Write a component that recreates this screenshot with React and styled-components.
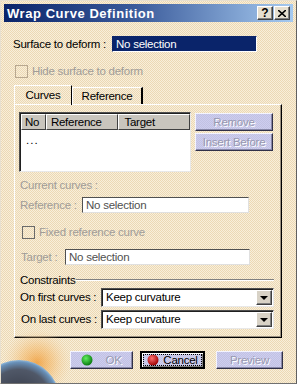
import React from "react";
import styled, { createGlobalStyle } from "styled-components";

const Global = createGlobalStyle`
  html, body { margin: 0; padding: 0; background: #f2e3c6; }
  * { box-sizing: border-box; }
`;

const Window = styled.div`
  position: relative;
  width: 297px;
  height: 384px;
  overflow: hidden;
  display: flex;
  flex-direction: column;
  padding: 3px;
  background-color: #f2e3c6;
  background-image: repeating-conic-gradient(#f8efda 0 25%, #ecd8b4 0 50%);
  background-size: 2px 2px;
  border: 1px solid #e8e0d0;
  border-right-color: #606060;
  border-bottom-color: #707070;
  font-family: "Liberation Sans", Arial, sans-serif;
  font-size: 11.5px;
  letter-spacing: -0.25px;
  line-height: 13px;
  color: #000;
`;

const TitleBar = styled.div`
  height: 18px;
  flex-shrink: 0;
  display: flex;
  align-items: center;
  padding: 0 3px 0 3px;
  background: linear-gradient(90deg, #0a246a 0%, #3a5a9a 45%, #a6caf0 100%);
`;

const Title = styled.div`
  flex: 1;
  color: #fff;
  font-weight: bold;
  font-size: 13px;
  letter-spacing: 0.55px;
`;

const CaptionButton = styled.div`
  width: 16px;
  height: 14px;
  margin-left: ${(p) => p.$ml || 0}px;
  display: flex;
  align-items: center;
  justify-content: center;
  background: #e6dfcf;
  border: 1px solid;
  border-color: #fff #404040 #404040 #fff;
  box-shadow: inset -1px -1px #808080;
  font-weight: bold;
  font-size: 12px;
  letter-spacing: 0;
  line-height: 1;
`;

const Row = styled.div`
  display: flex;
  align-items: center;
  flex-shrink: 0;
  margin-top: ${(p) => p.$mt || 0}px;
  padding-left: ${(p) => p.$pl || 0}px;
`;

const Label = styled.div`
  width: ${(p) => (p.$w ? `${p.$w}px` : "auto")};
  padding-left: ${(p) => p.$pl || 0}px;
  color: ${(p) => (p.$disabled ? "#a09c98" : "#000")};
  white-space: nowrap;
  flex-shrink: 0;
`;

const Field = styled.div`
  width: ${(p) => p.$w}px;
  height: 16px;
  display: flex;
  align-items: center;
  padding-left: 3px;
  background: ${(p) => (p.$selected ? "#0a246a" : "#fff")};
  color: ${(p) => (p.$selected ? "#fff" : "#505050")};
  border: 1px solid;
  border-color: ${(p) =>
    p.$selected ? "#0a246a #fff #fff #0a246a" : "#505050 #e0e0e0 #e0e0e0 #505050"};
`;

const Check = styled.div`
  width: 13px;
  height: 13px;
  border: 1px solid ${(p) => p.$c || "#8a8a8a"};
  margin-right: 4px;
  flex-shrink: 0;
`;

const Tabs = styled.div`
  display: flex;
  align-items: flex-end;
  flex-shrink: 0;
  margin-top: 7px;
  padding-left: 10px;
  height: 19px;
`;

const Tab = styled.div`
  width: ${(p) => p.$w}px;
  height: ${(p) => (p.$active ? 20 : 17)}px;
  display: flex;
  align-items: center;
  justify-content: center;
  padding-bottom: ${(p) => (p.$active ? 1 : 0)}px;
  border-top: 1px solid #fff;
  border-left: 1px solid #fff;
  border-right: ${(p) => (p.$active ? "1px solid #000" : "2px solid #000")};
  position: relative;
  z-index: ${(p) => (p.$active ? 2 : 1)};
  margin-bottom: ${(p) => (p.$active ? -1 : 0)}px;
`;

const Panel = styled.div`
  margin-left: 10px;
  width: 268px;
  height: 234px;
  flex-shrink: 0;
  border-top: 1px solid #fff;
  border-left: 1px solid #fff;
  border-right: 1px solid #000;
  border-bottom: 1px solid #000;
  box-shadow: inset -1px -1px #9a9080;
  display: flex;
  flex-direction: column;
  padding-left: 5px;
`;

const ListArea = styled.div`
  display: flex;
  gap: 4px;
  margin-top: 7px;
  margin-left: -1px;
`;

const Table = styled.div`
  width: 172px;
  height: 60px;
  background: #fff;
  border: 1px solid;
  border-color: #505050 #e8e8e8 #e8e8e8 #505050;
  box-shadow: inset 1px 1px #202020;
  display: flex;
  flex-direction: column;
  padding: 1px 0 0 1px;
`;

const HeaderRow = styled.div`
  display: flex;
  height: 16px;
`;

const HeaderCell = styled.div`
  width: ${(p) => p.$w}px;
  height: 16px;
  display: flex;
  align-items: center;
  padding-left: ${(p) => p.$pl || 4}px;
  background: #c9c5bd;
  border: 1px solid;
  border-color: #fff #404040 #404040 #fff;
`;

const TableBody = styled.div`
  padding: 4px 0 0 5px;
  letter-spacing: 1px;
`;

const SideButtons = styled.div`
  display: flex;
  flex-direction: column;
  gap: 2px;
  margin-top: 1px;
`;

const Btn = styled.div`
  width: ${(p) => p.$w}px;
  height: ${(p) => p.$h || 18}px;
  margin-left: ${(p) => p.$ml || 0}px;
  display: flex;
  align-items: center;
  justify-content: center;
  gap: ${(p) => p.$gap || 0}px;
  background-color: #c8c8ea;
  background-image: repeating-conic-gradient(#cdcdf0 0 25%, #c2c2e2 0 50%);
  background-size: 2px 2px;
  border: 1px solid;
  border-color: #f4f4ff #303048 #303048 #f4f4ff;
  box-shadow: inset -1px -1px #8888a8;
  color: ${(p) => (p.$disabled ? "#9898b0" : "#000")};
  text-shadow: ${(p) => (p.$disabled ? "1px 1px #fff" : "none")};
  position: relative;
  z-index: 1;
  ${(p) =>
    p.$default &&
    `
    border: 2px solid #000;
    box-shadow: inset 1px 1px #fff, inset -1px -1px #808080;
    outline: 1px dotted #000;
    outline-offset: -4px;
  `}
`;

const GroupHeader = styled.div`
  display: flex;
  align-items: center;
  margin-top: 9px;
  height: 13px;
  padding-right: 7px;
`;

const GroupLine = styled.div`
  flex: 1;
  height: 2px;
  margin-left: 1px;
  margin-top: -1px;
  border-top: 1px solid #808080;
  border-bottom: 1px solid #fff;
`;

const Combo = styled.div`
  width: 173px;
  height: 19px;
  display: flex;
  align-items: center;
  background: #fff;
  border: 1px solid;
  border-color: #505050 #e8e8e8 #e8e8e8 #505050;
  box-shadow: inset 1px 1px #202020;
  padding: 1px 1px 1px 4px;
`;

const ComboText = styled.div`
  flex: 1;
`;

const ArrowBtn = styled.div`
  width: 16px;
  height: 15px;
  display: flex;
  align-items: center;
  justify-content: center;
  background: #d8d2c6;
  border: 1px solid;
  border-color: #fff #404040 #404040 #fff;
  box-shadow: inset -1px -1px #808080;
`;

const Arrow = styled.div`
  width: 0;
  height: 0;
  border-left: 4px solid transparent;
  border-right: 4px solid transparent;
  border-top: 4px solid #000;
`;

const Footer = styled.div`
  display: flex;
  flex-shrink: 0;
  margin-top: 13px;
  padding-left: 66px;
`;

const Decoration = styled.svg`
  position: absolute;
  left: 0;
  bottom: 0;
  z-index: 0;
`;

const Sphere = ({ id, color, hi }) => (
  <svg width="12" height="12" viewBox="0 0 12 12">
    <defs>
      <radialGradient id={id} cx="0.4" cy="0.35" r="0.65">
        <stop offset="0" stopColor={hi} />
        <stop offset="1" stopColor={color} />
      </radialGradient>
    </defs>
    <circle cx="6" cy="6" r="5.5" fill={`url(#${id})`} />
  </svg>
);

export default function App() {
  return (
    <>
      <Global />
      <Window>
        <Decoration width="80" height="54" viewBox="0 0 80 54">
          <defs>
            <radialGradient id="glow" cx="36" cy="34" r="34" gradientUnits="userSpaceOnUse">
              <stop offset="0" stopColor="#f0a040" stopOpacity="0.9" />
              <stop offset="0.5" stopColor="#f4b868" stopOpacity="0.5" />
              <stop offset="1" stopColor="#f4d0a0" stopOpacity="0" />
            </radialGradient>
            <radialGradient id="globe" cx="18" cy="72" r="42" gradientUnits="userSpaceOnUse">
              <stop offset="0" stopColor="#303440" />
              <stop offset="0.75" stopColor="#505868" />
              <stop offset="0.92" stopColor="#6890b8" />
              <stop offset="1" stopColor="#a0c8e8" />
            </radialGradient>
          </defs>
          <rect x="0" y="0" width="80" height="54" fill="url(#glow)" />
          <circle cx="18" cy="72" r="41" fill="url(#globe)" />
        </Decoration>
        <TitleBar>
          <Title>Wrap Curve Definition</Title>
          <CaptionButton>?</CaptionButton>
          <CaptionButton $ml={1}>
            <svg width="8" height="7" viewBox="0 0 8 7">
              <path d="M0 0L8 7M8 0L0 7" stroke="#000" strokeWidth="1.6" />
            </svg>
          </CaptionButton>
        </TitleBar>

        <Row $mt={14} $pl={9}>
          <Label $w={99}>Surface to deform :</Label>
          <Field $selected $w={145}>No selection</Field>
        </Row>

        <Row $mt={13} $pl={11}>
          <Check $c="#b8a890" />
          <Label $disabled>Hide surface to deform</Label>
        </Row>

        <Tabs>
          <Tab $active $w={58}>Curves</Tab>
          <Tab $w={71}>Reference</Tab>
        </Tabs>

        <Panel>
          <ListArea>
            <Table>
              <HeaderRow>
                <HeaderCell $w={25} $pl={3}>No</HeaderCell>
                <HeaderCell $w={73}>Reference</HeaderCell>
                <HeaderCell $w={72} $pl={5}>Target</HeaderCell>
              </HeaderRow>
              <TableBody>...</TableBody>
            </Table>
            <SideButtons>
              <Btn $w={78} $h={18} $disabled>Remove</Btn>
              <Btn $w={78} $h={18} $disabled>Insert Before</Btn>
            </SideButtons>
          </ListArea>

          <Row $mt={7}>
            <Label $disabled>Current curves :</Label>
          </Row>

          <Row $mt={5}>
            <Label $disabled $w={62}>Reference :</Label>
            <Field $w={167}>No selection</Field>
          </Row>

          <Row $mt={13} $pl={2}>
            <Check $c="#6a6a6a" />
            <Label $disabled>Fixed reference curve</Label>
          </Row>

          <Row $mt={10}>
            <Label $disabled $w={45} $pl={1}>Target :</Label>
            <Field $w={185}>No selection</Field>
          </Row>

          <GroupHeader>
            <Label>Constraints</Label>
            <GroupLine />
          </GroupHeader>

          <Row $mt={1}>
            <Label $w={81}>On first curves :</Label>
            <Combo>
              <ComboText>Keep curvature</ComboText>
              <ArrowBtn><Arrow /></ArrowBtn>
            </Combo>
          </Row>

          <Row $mt={3}>
            <Label $w={81} $pl={1}>On last curves :</Label>
            <Combo>
              <ComboText>Keep curvature</ComboText>
              <ArrowBtn><Arrow /></ArrowBtn>
            </Combo>
          </Row>
        </Panel>

        <Footer>
          <Btn $w={63} $gap={12} $disabled>
            <Sphere id="okg" color="#0a7a10" hi="#60f060" />
            <span>OK</span>
          </Btn>
          <Btn $w={65} $ml={7} $gap={4} $default>
            <Sphere id="cng" color="#a00000" hi="#ff7070" />
            <span>Cancel</span>
          </Btn>
          <Btn $w={67} $ml={11} $disabled>Preview</Btn>
        </Footer>
      </Window>
    </>
  );
}
